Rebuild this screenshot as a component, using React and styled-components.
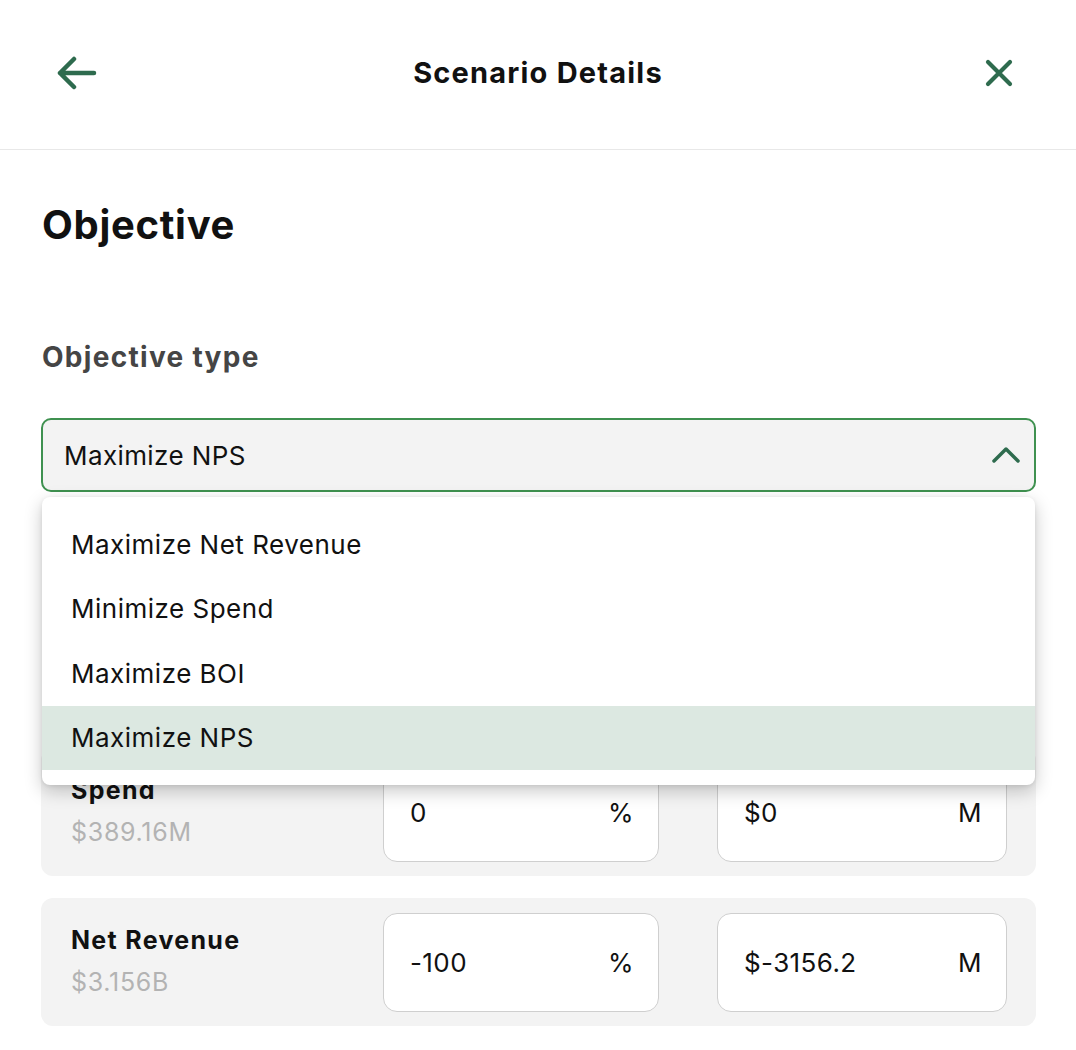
import React from "react";
import styled, { createGlobalStyle } from "styled-components";

const Global = createGlobalStyle`
  html, body { margin: 0; padding: 0; background: #fff; }
  body { font-family: Inter, "Open Sans", sans-serif; color: #111; }
  * { box-sizing: border-box; }
`;

const GREEN = "#2e6b4e";

const Page = styled.div`
  width: 1076px;
  height: 1050px;
  overflow: hidden;
  background: #fff;
`;

const Header = styled.header`
  height: 150px;
  border-bottom: 1px solid #e8e8e8;
  display: grid;
  grid-template-columns: 120px 1fr 120px;
  align-items: center;
  padding-bottom: 4px;
`;

const IconButton = styled.button`
  border: none;
  background: none;
  padding: 0;
  display: flex;
  align-items: center;
  justify-content: ${(p) => (p.$end ? "flex-end" : "flex-start")};
  padding-left: ${(p) => (p.$end ? "0" : "57px")};
  padding-right: ${(p) => (p.$end ? "63px" : "0")};
  color: ${GREEN};
  cursor: pointer;
`;

const Title = styled.h1`
  margin: 0;
  text-align: center;
  font-size: 29px;
  font-weight: 700;
  letter-spacing: 1.2px;
  color: #111;
`;

const Body = styled.main`
  padding: 0 40px 0 41px;
`;

const Heading = styled.h2`
  margin: 51px 0 0 1px;
  font-size: 40px;
  line-height: 48px;
  font-weight: 700;
  letter-spacing: 0.7px;
  color: #111;
`;

const FieldLabel = styled.div`
  margin: 91px 0 0 1px;
  font-size: 28px;
  line-height: 34px;
  font-weight: 700;
  letter-spacing: 1.3px;
  color: #454545;
`;

const SelectWrap = styled.div`
  position: relative;
  margin-top: 44px;
  margin-bottom: 256px;
`;

const SelectBox = styled.div`
  height: 74px;
  border: 2px solid #3f9150;
  border-radius: 10px;
  background: #f3f3f3;
  display: flex;
  align-items: center;
  justify-content: space-between;
  padding: 0 13px 0 21px;
  font-size: 26px;
  letter-spacing: 0.4px;
  color: #111;
`;

const Menu = styled.ul`
  position: absolute;
  top: 79px;
  left: 1px;
  right: 1px;
  margin: 0;
  padding: 15px 0;
  list-style: none;
  background: #fff;
  border-radius: 8px;
  box-shadow: 0 6px 18px rgba(0, 0, 0, 0.22), 0 1px 4px rgba(0, 0, 0, 0.08);
  z-index: 10;
`;

const MenuItem = styled.li`
  height: 64.5px;
  display: flex;
  align-items: center;
  padding-left: 29px;
  font-size: 26px;
  letter-spacing: 0.5px;
  color: #111;
  background: ${(p) => (p.$active ? "#dce8e1" : "transparent")};
`;

const Cards = styled.div`
  display: flex;
  flex-direction: column;
  gap: 22px;
`;

const Card = styled.div`
  height: 128px;
  background: #f3f3f3;
  border-radius: 12px;
  display: grid;
  grid-template-columns: 1fr 276px 290px;
  column-gap: 58px;
  align-items: center;
  padding: 0 29px 0 30px;
`;

const Metric = styled.div`
  display: flex;
  flex-direction: column;
  gap: 12px;
  margin-top: -2px;
`;

const MetricName = styled.div`
  font-size: 25px;
  font-weight: 700;
  letter-spacing: 1.3px;
  color: #111;
  line-height: 30px;
`;

const MetricValue = styled.div`
  font-size: 25px;
  color: #b3b3b3;
  line-height: 30px;
  letter-spacing: 0.7px;
`;

const InputBox = styled.div`
  height: 99px;
  background: #fff;
  border: 1px solid #cfcfcf;
  border-radius: 14px;
  display: flex;
  align-items: center;
  justify-content: space-between;
  padding: 0 24px 0 26px;
  font-size: 26px;
  letter-spacing: 0.4px;
  color: #111;
`;

const BackIcon = () => (
  <svg width="40" height="34" viewBox="0 0 40 34" fill="none" stroke="currentColor" strokeWidth="4.5" strokeLinecap="round" strokeLinejoin="round">
    <path d="M37 17H3M17 3L3 17l14 14" />
  </svg>
);

const CloseIcon = () => (
  <svg width="28" height="28" viewBox="0 0 28 28" fill="none" stroke="currentColor" strokeWidth="4.2" strokeLinecap="round">
    <path d="M3 3l22 22M25 3L3 25" />
  </svg>
);

const ChevronUp = () => (
  <svg width="30" height="18" viewBox="0 0 30 18" fill="none" stroke={GREEN} strokeWidth="3.5" strokeLinecap="round" strokeLinejoin="round">
    <path d="M3 15L15 3l12 12" />
  </svg>
);

const options = ["Maximize Net Revenue", "Minimize Spend", "Maximize BOI", "Maximize NPS"];

const rows = [
  { name: "Spend", value: "$389.16M", pct: "0", amt: "$0" },
  { name: "Net Revenue", value: "$3.156B", pct: "-100", amt: "$-3156.2" },
];

export default function App() {
  return (
    <Page>
      <Global />
      <Header>
        <IconButton aria-label="Back"><BackIcon /></IconButton>
        <Title>Scenario Details</Title>
        <IconButton $end aria-label="Close"><CloseIcon /></IconButton>
      </Header>
      <Body>
        <Heading>Objective</Heading>
        <FieldLabel>Objective type</FieldLabel>
        <SelectWrap>
          <SelectBox>
            <span>Maximize NPS</span>
            <ChevronUp />
          </SelectBox>
          <Menu>
            {options.map((o) => (
              <MenuItem key={o} $active={o === "Maximize NPS"}>{o}</MenuItem>
            ))}
          </Menu>
        </SelectWrap>
        <Cards>
          {rows.map((r) => (
            <Card key={r.name}>
              <Metric>
                <MetricName>{r.name}</MetricName>
                <MetricValue>{r.value}</MetricValue>
              </Metric>
              <InputBox><span>{r.pct}</span><span>%</span></InputBox>
              <InputBox><span>{r.amt}</span><span>M</span></InputBox>
            </Card>
          ))}
        </Cards>
      </Body>
    </Page>
  );
}
